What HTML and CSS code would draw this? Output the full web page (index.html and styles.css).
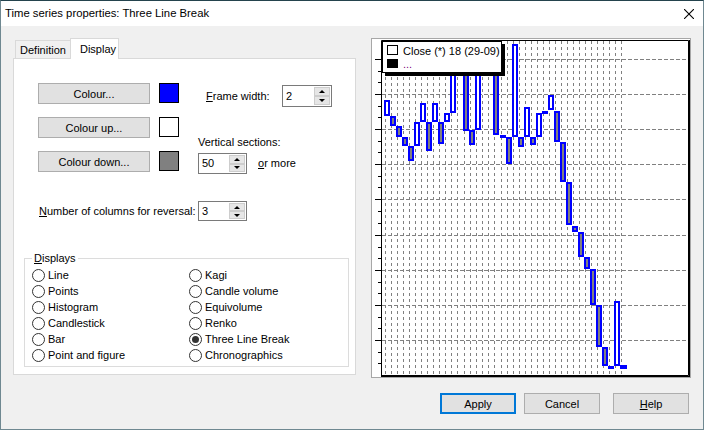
FILE: index.html
```html
<!DOCTYPE html>
<html lang="en">
<head>
    <meta charset="UTF-8">
    <meta name="viewport" content="width=device-width, initial-scale=1.0">
    <title>Time series properties</title>
    <link rel="stylesheet" href="styles.css">
</head>
<body>
<div class="window">
    <div class="titlebar">
        <span class="title">Time series properties: Three Line Break</span>
        <svg class="close" width="10" height="10" viewBox="0 0 10 10">
            <path d="M0 0L10 10M10 0L0 10" stroke="#000" stroke-width="1.1" fill="none"/>
        </svg>
    </div>

    <div class="main">
        <div class="tabs">
            <div class="tabstrip">
                <div class="tab">Definition</div>
                <div class="tab active">Display</div>
            </div>
            <div class="panel">
                <div class="top">
                    <div class="colours">
                        <button class="btn">Colour...</button>
                        <span class="swatch blue"></span>
                        <button class="btn">Colour up...</button>
                        <span class="swatch white"></span>
                        <button class="btn">Colour down...</button>
                        <span class="swatch grey"></span>
                    </div>
                    <div class="settings">
                        <div class="frame-row">
                            <label class="frame-label"><u>F</u>rame width:</label>
                            <div class="spin wide">
                                <span class="val">2</span>
                                <span class="arrows"><span class="up"></span><span class="down"></span></span>
                            </div>
                        </div>
                        <label class="vs-label">Vertical sections:</label>
                        <div class="vs-row">
                            <div class="spin">
                                <span class="val">50</span>
                                <span class="arrows"><span class="up"></span><span class="down"></span></span>
                            </div>
                            <span><u>o</u>r more</span>
                        </div>
                    </div>
                </div>

                <div class="reversal">
                    <label class="rev-label"><u>N</u>umber of columns for reversal:</label>
                    <div class="spin short">
                        <span class="val">3</span>
                        <span class="arrows"><span class="up"></span><span class="down"></span></span>
                    </div>
                </div>

                <fieldset class="displays">
                    <legend><u>D</u>isplays</legend>
                    <div class="radios">
                        <div class="radio"><span class="dot"></span>Line</div>
                        <div class="radio"><span class="dot"></span>Points</div>
                        <div class="radio"><span class="dot"></span>Histogram</div>
                        <div class="radio"><span class="dot"></span>Candlestick</div>
                        <div class="radio"><span class="dot"></span>Bar</div>
                        <div class="radio"><span class="dot"></span>Point and figure</div>
                        <div class="radio"><span class="dot"></span>Kagi</div>
                        <div class="radio"><span class="dot"></span>Candle volume</div>
                        <div class="radio"><span class="dot"></span>Equivolume</div>
                        <div class="radio"><span class="dot"></span>Renko</div>
                        <div class="radio"><span class="dot checked"></span>Three Line Break</div>
                        <div class="radio"><span class="dot"></span>Chronographics</div>
                    </div>
                </fieldset>
            </div>
        </div>

        <div class="chart">
            <svg width="320" height="340" viewBox="371 38 320 340">
                <rect x="371.5" y="38.5" width="319" height="339" fill="#fff" stroke="#a7a7a7"/>

                <!-- vertical grid -->
                <path fill="none" stroke="#808080" stroke-dasharray="3 3" d="M385.5 41V375M391.5 41V375M397.5 41V375M403.5 41V375M409.5 41V375M415.5 41V375M421.5 41V375M427.5 41V375M433.5 41V375M439.5 41V375M445.5 41V375M451.5 41V375M457.5 41V375M464.5 41V375M470.5 41V375M476.5 41V375M482.5 41V375M488.5 41V375M494.5 41V375M501.5 41V375M507.5 41V375M513.5 41V375M519.5 41V375M525.5 41V375M531.5 41V375M537.5 41V375M543.5 41V375M549.5 41V375M555.5 41V375M561.5 41V375M567.5 41V375M573.5 41V375M579.5 41V375M585.5 41V375M591.5 41V375M597.5 41V375M603.5 41V375M609.5 41V375M615.5 41V375M621.5 41V375"/>
                <!-- horizontal grid -->
                <path fill="none" stroke="#808080" stroke-dasharray="4 2" d="M382 59.5H688M382 94.5H688M382 129.5H688M382 164.5H688M382 199.5H688M382 235.5H688M382 270.5H688M382 305.5H688M382 340.5H688"/>
                <!-- axis ticks -->
                <path fill="none" stroke="#000" d="M375 59.5H381M375 94.5H381M375 129.5H381M375 164.5H381M375 199.5H381M375 235.5H381M375 270.5H381M375 305.5H381M375 340.5H381M378 71.5H381M378 82.5H381M378 106.5H381M378 117.5H381M378 141.5H381M378 152.5H381M378 176.5H381M378 187.5H381M378 211.5H381M378 223.5H381M378 247.5H381M378 258.5H381M378 282.5H381M378 293.5H381M378 317.5H381M378 328.5H381M378 352.5H381M378 363.5H381"/>
                <!-- frame -->
                <path fill="none" stroke="#000" d="M381.5 376V40.5H688.5V375.5H381"/>
                <path fill="none" stroke="#000" d="M689.5 40V377M381 376.5H690"/>

                <!-- three line break columns -->
                <g stroke="#0000ff" stroke-width="2">
                    <rect x="385" y="101" width="4" height="14" fill="#fff"/>
                    <rect x="391" y="117" width="4" height="8" fill="#808080"/>
                    <rect x="397" y="127" width="4" height="9" fill="#808080"/>
                    <rect x="403" y="138" width="4" height="7" fill="#808080"/>
                    <rect x="409" y="147" width="4" height="13" fill="#808080"/>
                    <rect x="415" y="123" width="4" height="22" fill="#fff"/>
                    <rect x="421" y="104" width="4" height="17" fill="#fff"/>
                    <rect x="427" y="123" width="4" height="27" fill="#808080"/>
                    <rect x="433" y="104" width="4" height="17" fill="#fff"/>
                    <rect x="439" y="123" width="4" height="20" fill="#808080"/>
                    <rect x="445" y="114" width="4" height="7" fill="#fff"/>
                    <rect x="451" y="61" width="4" height="51" fill="#fff"/>
                    <rect x="457" y="48" width="4" height="12" fill="#fff"/>
                    <rect x="464" y="48" width="4" height="82" fill="#808080"/>
                    <rect x="470" y="131" width="4" height="13" fill="#808080"/>
                    <rect x="476" y="56" width="4" height="73" fill="#fff"/>
                    <rect x="482" y="51" width="4" height="4" fill="#fff"/>
                    <rect x="488" y="51" width="4" height="14" fill="#808080"/>
                    <rect x="494" y="66" width="4" height="68" fill="#808080"/>
                    <rect x="507" y="138" width="4" height="25" fill="#808080"/>
                    <rect x="513" y="45" width="4" height="91" fill="#fff"/>
                    <rect x="519" y="138" width="4" height="8" fill="#808080"/>
                    <rect x="525" y="108" width="4" height="28" fill="#fff"/>
                    <rect x="531" y="138" width="4" height="6" fill="#808080"/>
                    <rect x="537" y="114" width="4" height="22" fill="#fff"/>
                    <rect x="549" y="96" width="4" height="13" fill="#fff"/>
                    <rect x="555" y="112" width="4" height="29" fill="#808080"/>
                    <rect x="561" y="143" width="4" height="38" fill="#808080"/>
                    <rect x="567" y="183" width="4" height="41" fill="#808080"/>
                    <rect x="573" y="227" width="4" height="4" fill="#808080"/>
                    <rect x="579" y="233" width="4" height="23" fill="#808080"/>
                    <rect x="585" y="258" width="4" height="10" fill="#808080"/>
                    <rect x="591" y="270" width="4" height="34" fill="#808080"/>
                    <rect x="597" y="306" width="4" height="40" fill="#808080"/>
                    <rect x="603" y="348" width="4" height="17" fill="#808080"/>
                    <rect x="609" y="367" width="4" height="1" fill="#808080"/>
                    <rect x="615" y="302" width="4" height="63" fill="#fff"/>
                </g>
                <g fill="#0000ff">
                    <rect x="500" y="135" width="6" height="3"/>
                    <rect x="542" y="111" width="6" height="3"/>
                    <rect x="620" y="365" width="7" height="4"/>
                </g>

                <!-- legend -->
                <rect x="385" y="44" width="120" height="32" fill="#000"/>
                <rect x="382.5" y="41.5" width="119" height="31" fill="#fff" stroke="#000"/>
                <rect x="387.5" y="45.5" width="10" height="9" fill="#fff" stroke="#000"/>
                <text class="legend-text" x="403" y="54.5">Close (*) 18 (29-09)</text>
                <rect x="387" y="59" width="11" height="9" fill="#000"/>
                <text class="legend-text more" x="403" y="68">...</text>
            </svg>
        </div>
    </div>

    <div class="actions">
        <button class="btn action default">Apply</button>
        <button class="btn action">Cancel</button>
        <button class="btn action help"><u>H</u>elp</button>
    </div>
</div>
</body>
</html>
```

FILE: styles.css
```css
* {
    box-sizing: border-box;
}

body {
    margin: 0;
    font-family: "Liberation Sans", Arial, sans-serif;
    font-size: 11px;
    color: #000;
}

u {
    text-decoration-thickness: 1px;
    text-underline-offset: 1px;
}

.window {
    width: 704px;
    height: 430px;
    background: #f0f0f0;
    border: 1px solid #6f8891;
    border-top-color: #24434d;
    display: flex;
    flex-direction: column;
}

.titlebar {
    height: 25px;
    background: #fff;
    display: flex;
    align-items: center;
    justify-content: space-between;
    padding: 0 9px 1px 4px;
}

.title {
    font-size: 11.3px;
}

.close {
    display: block;
    margin-top: 1px;
}

.main {
    display: flex;
    align-items: flex-start;
    gap: 15px;
    margin-top: 12px;
    padding-left: 12px;
}

/* tabs */
.tabs {
    width: 343px;
}

.tabstrip {
    display: flex;
    align-items: flex-end;
    height: 20px;
    padding-left: 2px;
    position: relative;
    z-index: 1;
}

.tab {
    height: 18px;
    line-height: 18px;
    width: 56px;
    text-align: center;
    background: #f0f0f0;
    border: 1px solid #d9d9d9;
    border-bottom: none;
}

.tab.active {
    height: 21px;
    line-height: 20px;
    width: 49px;
    margin-left: -1px;
    margin-bottom: -1px;
    padding-left: 7px;
    background: #fff;
}

.panel {
    height: 317px;
    background: #fff;
    border: 1px solid #d9d9d9;
    padding: 24px 6px 0 10px;
}

.top {
    display: flex;
    gap: 19px;
    margin-left: 14px;
}

.colours {
    display: grid;
    grid-template-columns: 112px 20px;
    column-gap: 9px;
    row-gap: 11px;
    align-items: start;
}

.btn {
    height: 21px;
    padding: 0;
    font: inherit;
    color: #000;
    background: #e1e1e1;
    border: 1px solid #adadad;
}

.swatch {
    width: 20px;
    height: 20px;
    border: 1px solid #000;
}

.swatch.blue { background: #0000ff; }
.swatch.white { background: #fff; }
.swatch.grey { background: #808080; }

.settings {
    display: flex;
    flex-direction: column;
    padding-top: 2px;
    line-height: 13px;
}

.frame-row {
    display: flex;
    align-items: center;
}

.frame-label {
    width: 84px;
    padding-left: 8px;
}

.vs-label {
    margin-top: 29px;
}

.vs-row {
    display: flex;
    align-items: center;
    gap: 11px;
    margin-top: 4px;
}

/* spin boxes */
.spin {
    display: flex;
    width: 49px;
    height: 21px;
    background: #fff;
    border: 1px solid #7a7a7a;
}

.spin.wide {
    width: 50px;
    height: 22px;
}

.spin.short {
    height: 20px;
}

.spin .val {
    flex: 1;
    padding-left: 3px;
    display: flex;
    align-items: center;
}

.arrows {
    display: flex;
    flex-direction: column;
    width: 16px;
    margin: 1px;
}

.arrows span {
    flex: 1;
    background: #e6e6e6;
    border: 1px solid #cdcdcd;
    display: flex;
    align-items: center;
    justify-content: center;
}

.arrows .up::before,
.arrows .down::before {
    content: "";
    border-left: 3px solid transparent;
    border-right: 3px solid transparent;
}

.arrows .up::before {
    border-bottom: 3px solid #000;
}

.arrows .down::before {
    border-top: 3px solid #000;
}

.reversal {
    display: flex;
    align-items: center;
    margin: 27px 0 0 14px;
}

.rev-label {
    width: 160px;
    padding-left: 1px;
}

/* displays group */
.displays {
    margin: 31px 0 0;
    min-width: 0;
    padding: 2px 0 3px 7px;
    border: 1px solid #dcdcdc;
}

.displays legend {
    padding: 0 2px;
    line-height: 13px;
}

.radios {
    display: grid;
    grid-template-columns: 157px 1fr;
    grid-template-rows: repeat(6, 16px);
    grid-auto-flow: column;
}

.radio {
    display: flex;
    align-items: center;
    gap: 3px;
}

.dot {
    width: 13px;
    height: 13px;
    border: 1px solid #333;
    border-radius: 50%;
    background: #fff;
    display: flex;
    align-items: center;
    justify-content: center;
}

.dot.checked::after {
    content: "";
    width: 7px;
    height: 7px;
    border-radius: 50%;
    background: #333;
}

/* chart */
.chart svg {
    display: block;
}

.legend-text {
    font-family: "Liberation Sans", Arial, sans-serif;
    font-size: 11px;
    fill: #000;
}

.legend-text.more {
    fill: #800080;
}

/* bottom buttons */
.actions {
    display: flex;
    justify-content: flex-end;
    gap: 8px;
    margin-top: 15px;
    padding-right: 14px;
}

.action {
    width: 76px;
}

.action.default {
    border: 2px solid #0078d7;
}

.action.help {
    margin-left: 5px;
}
```
